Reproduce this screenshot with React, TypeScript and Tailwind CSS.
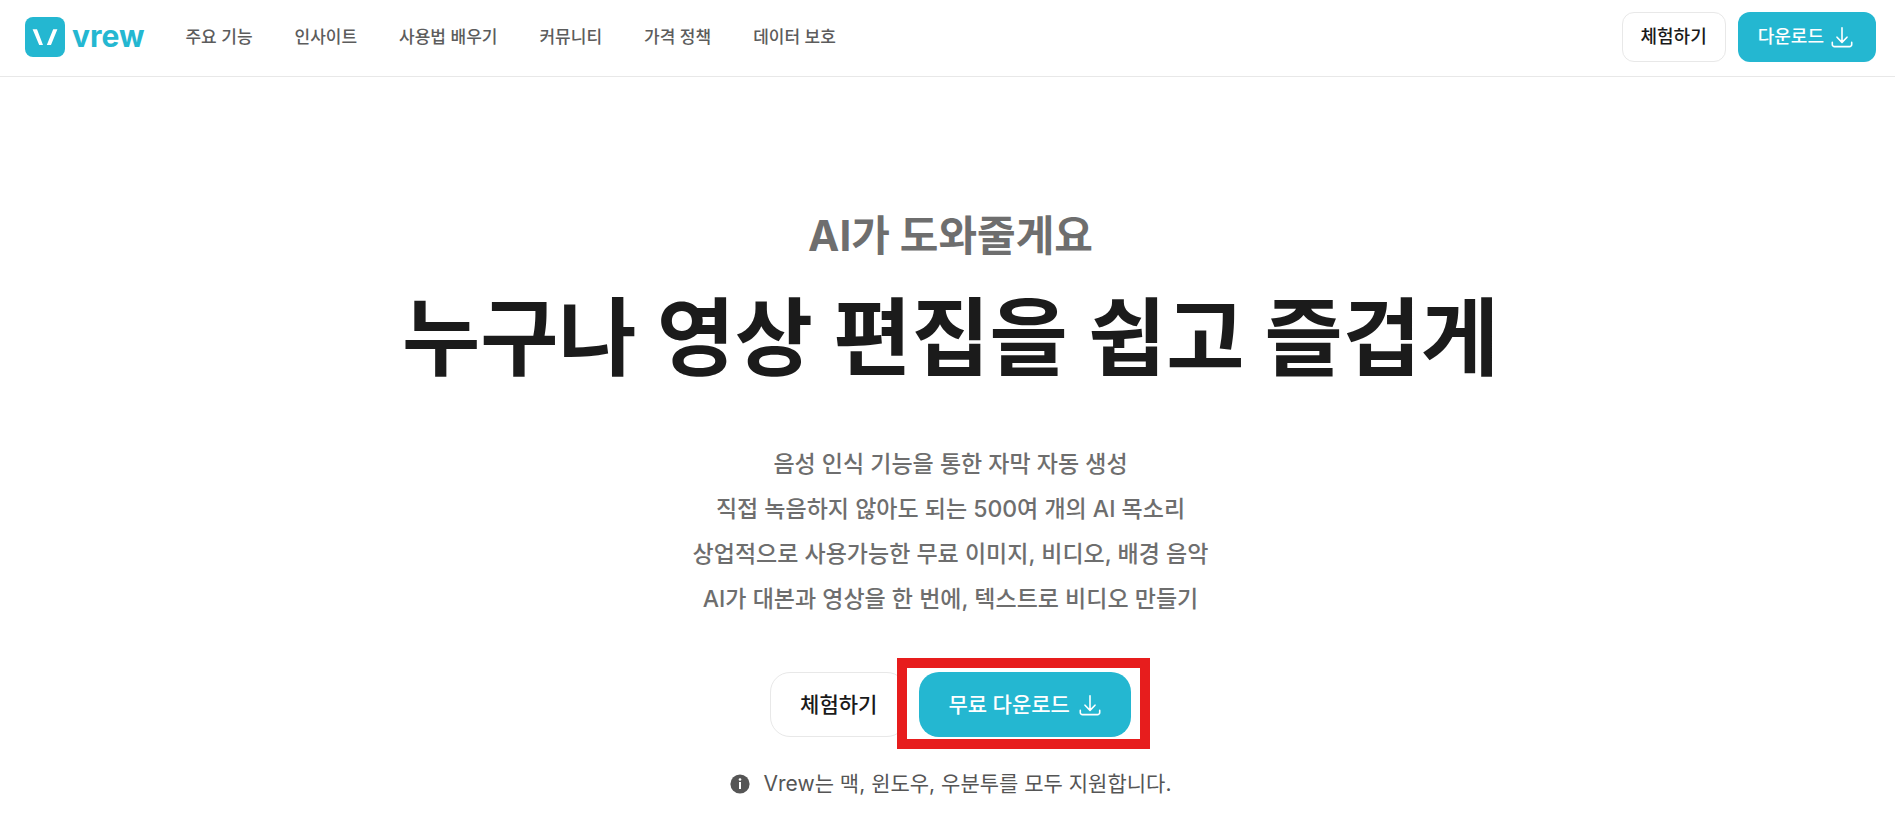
const navItems = ['주요 기능', '인사이트', '사용법 배우기', '커뮤니티', '가격 정책', '데이터 보호'];

const features = [
  '음성 인식 기능을 통한 자막 자동 생성',
  '직접 녹음하지 않아도 되는 500여 개의 AI 목소리',
  '상업적으로 사용가능한 무료 이미지, 비디오, 배경 음악',
  'AI가 대본과 영상을 한 번에, 텍스트로 비디오 만들기',
];

function LogoMark() {
  return (
    <svg className="size-10" viewBox="0 0 40 40" aria-hidden="true">
      <rect width="40" height="40" rx="8" fill="#24b7d1" />
      <path d="M7.6 12.2h4.4L18 28h-3.8zM28.2 12.2h4.2L26 28h-4.2z" fill="#fff" />
    </svg>
  );
}

function DownloadIcon() {
  return (
    <svg
      className="size-6 shrink-0"
      viewBox="0 0 24 24"
      fill="none"
      stroke="currentColor"
      strokeWidth="1.6"
      strokeLinecap="round"
      strokeLinejoin="round"
      aria-hidden="true"
    >
      <path d="M12 2.7v14.6M7 12.2l5 5.2 5-5.2M2.3 17.4v2a2.2 2.2 0 0 0 2.2 2.2h15a2.2 2.2 0 0 0 2.2-2.2v-2" />
    </svg>
  );
}

function InfoIcon() {
  return (
    <svg className="size-5 shrink-0" viewBox="0 0 20 20" aria-hidden="true">
      <circle cx="10" cy="10" r="9.6" fill="#555" />
      <circle cx="10" cy="5.5" r="1.3" fill="#fff" />
      <path d="M10 8v7" stroke="#fff" strokeWidth="2" />
    </svg>
  );
}

export default function App() {
  return (
    <div className="bg-white font-['Inter','Noto_Sans_CJK_KR',sans-serif]" lang="ko">
      <header className="flex items-start justify-between border-b border-[#e8e8e8] pt-3 pr-[19px] pb-[14px] pl-[25px]">
        <div className="flex h-[50px] items-center gap-[41px]">
          <a href="#" className="flex items-center gap-[7px] text-[#24b7d1]">
            <LogoMark />
            <span className="pb-[2px] text-3xl leading-9 font-bold">vrew</span>
          </a>
          <nav className="flex items-center gap-[42px]">
            {navItems.map((item) => (
              <a key={item} href="#" className="text-[17px] leading-6 font-medium whitespace-nowrap text-[#5c5c5c]">
                {item}
              </a>
            ))}
          </nav>
        </div>
        <div className="flex gap-3">
          <button className="h-[50px] rounded-xl border border-[#e8e8e8] px-[18px] text-lg font-medium text-[#1a1a1a]">
            체험하기
          </button>
          <button className="flex h-[50px] items-center gap-[6px] rounded-xl bg-[#24b7d1] pr-[22px] pl-5 text-lg font-medium text-white">
            다운로드
            <DownloadIcon />
          </button>
        </div>
      </header>

      <main className="flex flex-col items-center pt-[131px] pl-[6px] text-center">
        <p className="text-[42px] leading-[56px] font-bold text-[#6e6e6e]">AI가 도와줄게요</p>
        <h1 className="mt-[19px] text-[85px] leading-[112px] font-bold text-[#1b1b1b]">누구나 영상 편집을 쉽고 즐겁게</h1>
        <div className="mt-[47px] text-[23px] leading-[45px] font-medium text-[#6e6e6e]">
          {features.map((line) => (
            <p key={line}>{line}</p>
          ))}
        </div>
        <div className="mt-[50px] flex gap-3">
          <button className="h-[65px] rounded-[20px] border border-[#e8e8e8] px-[29px] text-[21px] font-medium text-[#1a1a1a]">
            체험하기
          </button>
          <div className="relative">
            <button className="flex h-[65px] items-center gap-2 rounded-[20px] bg-[#24b7d1] px-[29px] text-[21px] font-medium text-white">
              무료 다운로드
              <DownloadIcon />
            </button>
            <span className="pointer-events-none absolute -top-[14px] -right-[19px] -bottom-3 -left-[22px] border-10 border-[#e71d1d]" />
          </div>
        </div>
        <p className="mt-8 flex items-center gap-[14px] text-[21px] leading-[30px] text-[#555]">
          <InfoIcon />
          <span>Vrew는 맥, 윈도우, 우분투를 모두 지원합니다.</span>
        </p>
      </main>
    </div>
  );
}
